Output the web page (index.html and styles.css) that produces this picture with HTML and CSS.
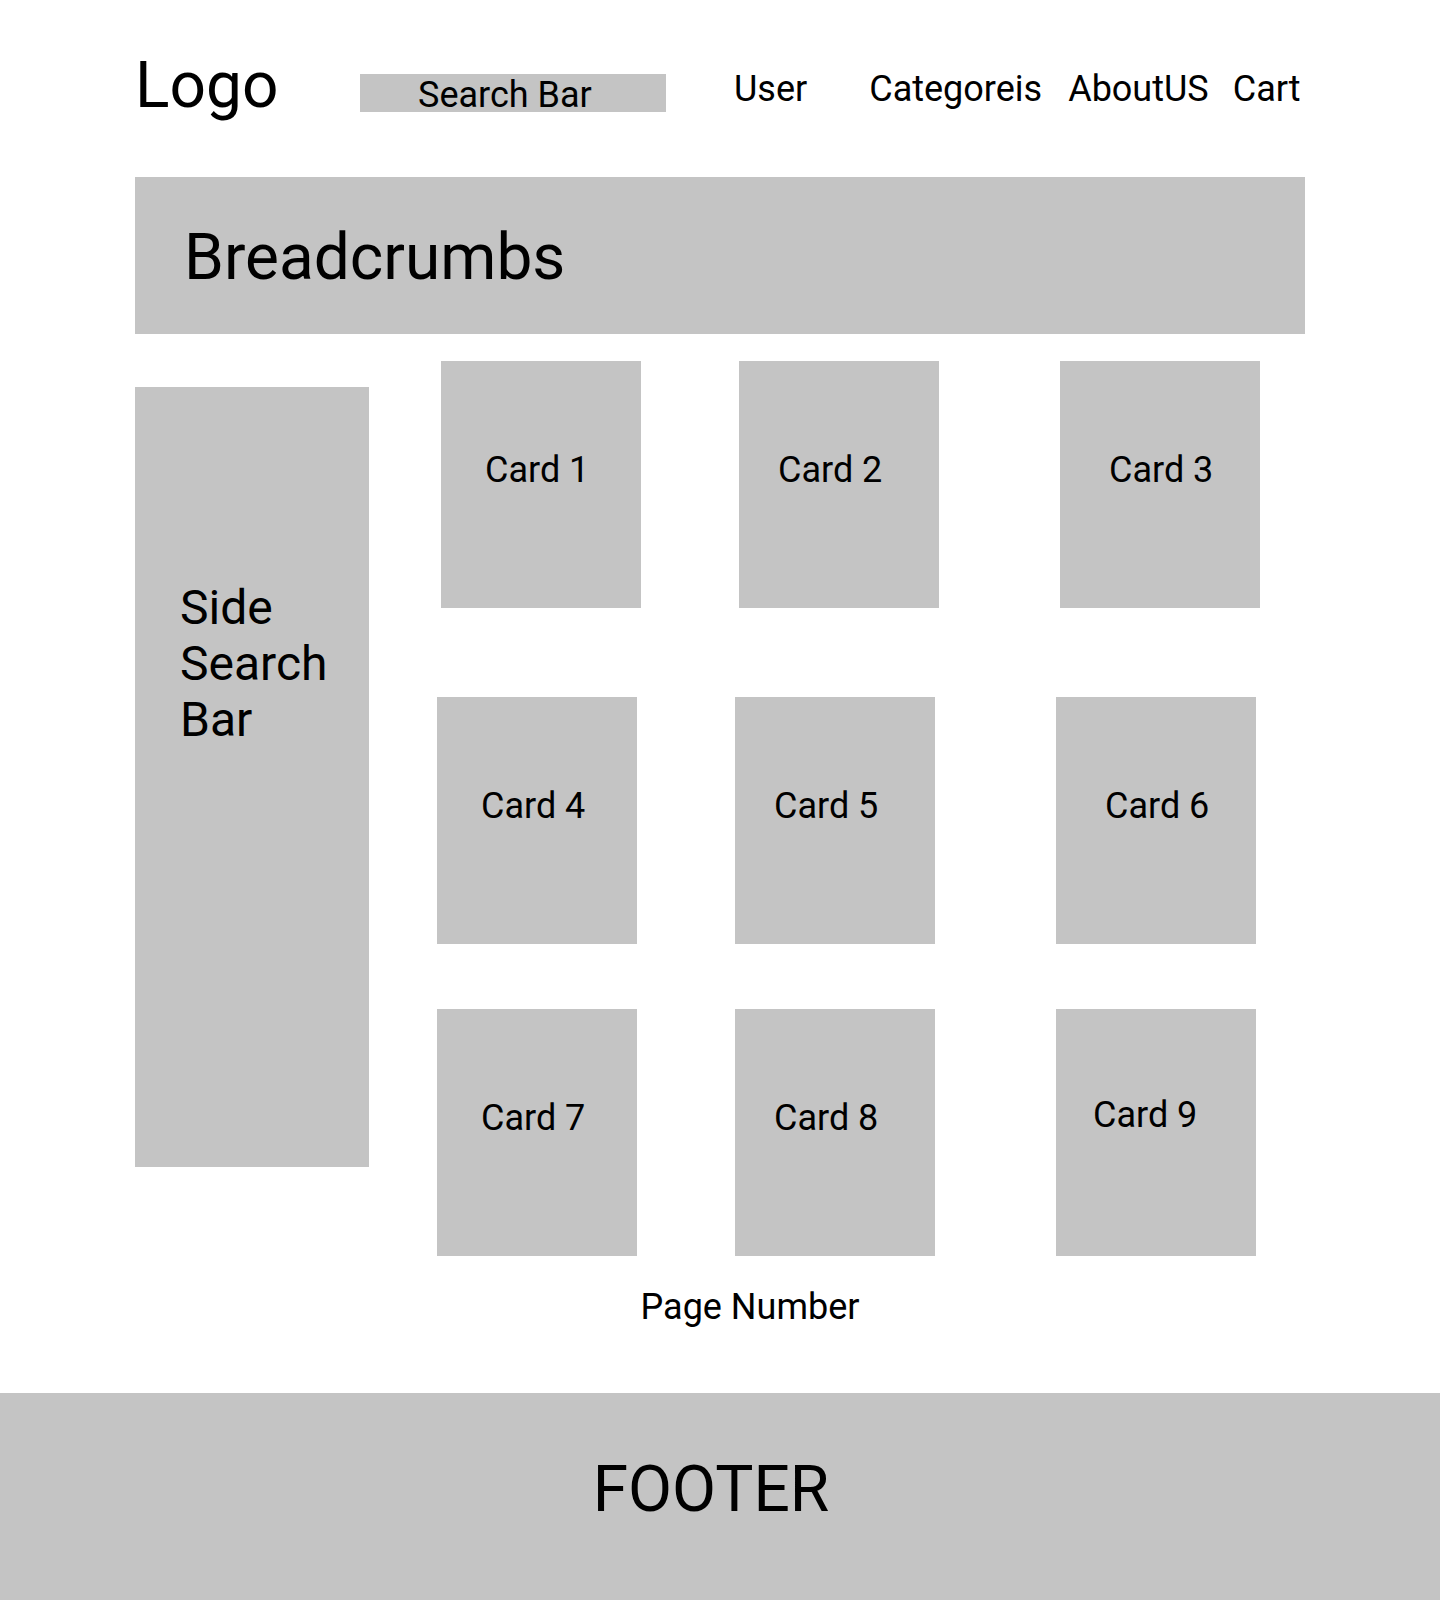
FILE: index.html
```html
<!DOCTYPE html>
<html lang="en">
<head>
    <meta charset="UTF-8">
    <meta name="viewport" content="width=device-width, initial-scale=1.0">
    <title>Shop Wireframe</title>
    <link rel="stylesheet" href="styles.css">
</head>
<body>
    <div class="wrap">
        <header class="topbar">
            <div class="logo">Logo</div>
            <div class="search">Search Bar</div>
            <nav class="nav">
                <a href="#">User</a>
                <a href="#">Categoreis</a>
                <a href="#">AboutUS</a>
                <a href="#">Cart</a>
            </nav>
        </header>

        <div class="breadcrumbs">Breadcrumbs</div>

        <main class="content">
            <aside class="side-search">Side Search Bar</aside>

            <section class="cards">
                <div class="card-row first">
                    <div class="card">Card 1</div>
                    <div class="card">Card 2</div>
                    <div class="card">Card 3</div>
                </div>
                <div class="card-row second">
                    <div class="card">Card 4</div>
                    <div class="card">Card 5</div>
                    <div class="card">Card 6</div>
                </div>
                <div class="card-row third">
                    <div class="card">Card 7</div>
                    <div class="card">Card 8</div>
                    <div class="card odd">Card 9</div>
                </div>
            </section>
        </main>
    </div>

    <div class="pager">Page Number</div>

    <footer>FOOTER</footer>
</body>
</html>
```

FILE: styles.css
```css
* {
    box-sizing: border-box;
}

body {
    margin: 0;
    padding: 0;
    background: #fff;
    color: #000;
    font-family: Roboto, "Liberation Sans", sans-serif;
}

.wrap {
    width: 1170px;
    margin-left: 135px;
}

/* Header */
.topbar {
    display: flex;
    align-items: flex-start;
    height: 177px;
}

.logo {
    width: 225px;
    margin-top: 48px;
    font-size: 64px;
    line-height: 75px;
}

.search {
    width: 306px;
    height: 38px;
    margin-top: 74px;
    padding: 3px 0 0 58px;
    background-color: #c4c4c4;
    font-size: 36px;
    line-height: 36px;
    white-space: nowrap;
}

.nav {
    display: flex;
    margin-top: 68px;
    margin-left: 68px;
}

.nav a {
    color: #000;
    text-decoration: none;
    font-size: 36px;
    line-height: 42px;
}

.nav a:nth-child(2) {
    margin-left: 62px;
}

.nav a:nth-child(3) {
    margin-left: 26px;
}

.nav a:nth-child(4) {
    margin-left: 24px;
}

/* Breadcrumbs */
.breadcrumbs {
    height: 157px;
    padding: 43px 0 0 49px;
    background-color: #c4c4c4;
    font-size: 64px;
    line-height: 75px;
}

/* Sidebar + cards */
.content {
    display: flex;
    align-items: flex-start;
    margin-top: 27px;
}

.side-search {
    width: 234px;
    height: 780px;
    margin-top: 26px;
    padding: 193px 0 0 45px;
    background-color: #c4c4c4;
    font-size: 48px;
    line-height: 56px;
}

.cards {
    margin-left: 68px;
}

.card-row {
    display: flex;
}

.card-row.first {
    margin-left: 4px;
}

.card-row.second {
    margin-top: 89px;
}

.card-row.third {
    margin-top: 65px;
}

.card {
    width: 200px;
    height: 247px;
    padding-top: 88px;
    background-color: #c4c4c4;
    font-size: 36px;
    line-height: 42px;
}

.card:nth-child(1) {
    margin-right: 98px;
    padding-left: 44px;
}

.card:nth-child(2) {
    margin-right: 121px;
    padding-left: 39px;
}

.card:nth-child(3) {
    padding-left: 49px;
}

.card.odd {
    padding-top: 85px;
    padding-left: 37px;
}

/* Pagination */
.pager {
    margin-top: 30px;
    padding-left: 60px;
    text-align: center;
    font-size: 36px;
    line-height: 42px;
}

/* Footer */
footer {
    height: 207px;
    margin-top: 65px;
    padding: 59px 18px 0 0;
    background-color: #c4c4c4;
    text-align: center;
    font-size: 64px;
    line-height: 75px;
}
```
